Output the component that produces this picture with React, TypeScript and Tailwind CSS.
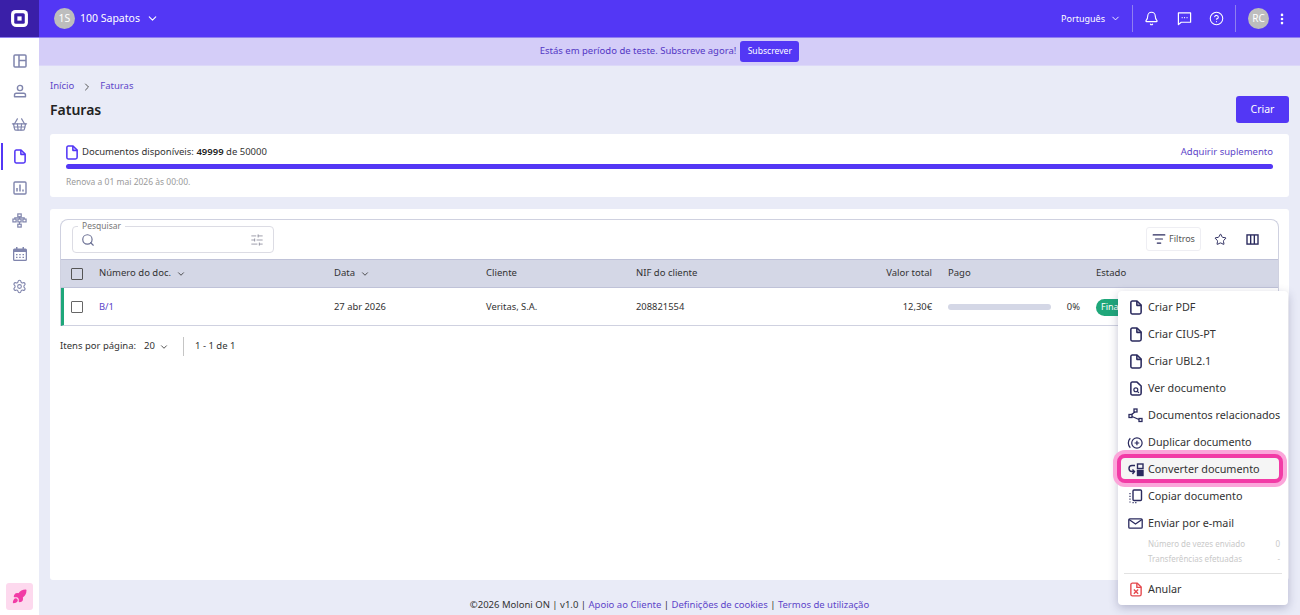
import { Bell, ChevronDown, ChevronRight, CircleHelp, EllipsisVertical, Search, SlidersHorizontal, Star, Rocket, ShoppingBasket, Settings, ListFilter } from "lucide-react";

function DocIcon({ className = "" }: { className?: string }) {
  return (
    <svg viewBox="0 0 14 17" fill="none" stroke="currentColor" strokeWidth="1.8" className={"h-[15px] w-[12px] " + className}>
      <path d="M2.5 1h5.7L13 5.6V14a2 2 0 0 1-2 2H2.5A1.7 1.7 0 0 1 1 14.2V2.7A1.7 1.7 0 0 1 2.5 1Z" strokeLinejoin="round" />
      <path d="M8 1v5h5" strokeLinejoin="round" />
    </svg>
  );
}

function SideIcons() {
  const c = "text-[#8085ad]";
  return (
    <div className="flex flex-col items-center">
      <div className="h-[30px] flex items-center justify-center w-full">
        <svg viewBox="0 0 14 14" width="14" height="14" fill="none" stroke="currentColor" strokeWidth="1.5" className={c}>
          <rect x="1" y="1" width="12" height="12" rx="1" />
          <path d="M6 1v12M6 6.5h7" />
        </svg>
      </div>
      <div className="h-[30px] flex items-center justify-center w-full">
        <svg viewBox="0 0 14 14" width="14" height="14" fill="none" stroke="currentColor" strokeWidth="1.4" className={c}>
          <circle cx="7" cy="4" r="2.6" />
          <path d="M1.5 12.8V11a1.8 1.8 0 0 1 1.8-1.8h7.4a1.8 1.8 0 0 1 1.8 1.8v1.8Z" strokeLinejoin="round" />
        </svg>
      </div>
      <div className="mt-[2px] h-[32px] flex items-center justify-center w-full">
        <ShoppingBasket size={17} strokeWidth={1.7} className={c} />
      </div>
      <div className="relative h-[32px] flex items-center justify-center w-full text-[#5337f5]">
        <div className="absolute left-[1px] top-[3px] h-[27px] w-[2px] bg-[#5337f5]" />
        <DocIcon />
      </div>
      <div className="h-[32px] flex items-center justify-center w-full">
        <svg viewBox="0 0 14 14" width="14" height="14" fill="none" stroke="currentColor" strokeWidth="1.4" className={c}>
          <rect x="1" y="1" width="12" height="12" rx="1" />
          <path d="M4 10.5V7M7 10.5V3.5M10 10.5V8.5" strokeWidth="1.5" />
        </svg>
      </div>
      <div className="h-[33px] flex items-center justify-center w-full">
        <svg viewBox="0 0 16 16" width="15" height="15" fill="none" stroke="currentColor" strokeWidth="1.3" className={c}>
          <rect x="6.2" y="1" width="3.6" height="3" />
          <rect x="1" y="6.5" width="3.4" height="3" />
          <rect x="6.3" y="6.5" width="3.4" height="3" />
          <rect x="11.6" y="6.5" width="3.4" height="3" />
          <rect x="6.2" y="12" width="3.6" height="3" />
          <path d="M3 6.5V5.2h10v1.3M8 4v2.5M8 9.5V12" />
        </svg>
      </div>
      <div className="h-[34px] flex items-center justify-center w-full">
        <svg viewBox="0 0 14 14" width="14" height="14" className={c}>
          <path d="M3 0h1.5v1.5h5V0H11v1.5h1.5A1.5 1.5 0 0 1 14 3v9.5a1.5 1.5 0 0 1-1.5 1.5h-11A1.5 1.5 0 0 1 0 12.5V3a1.5 1.5 0 0 1 1.5-1.5H3Z" fill="currentColor" />
          <rect x="1.3" y="5" width="11.4" height="7.7" fill="#fff" />
          <path d="M3 7h1.5v1.2H3ZM6.2 7h1.5v1.2H6.2ZM9.5 7H11v1.2H9.5ZM3 9.7h1.5v1.2H3ZM6.2 9.7h1.5v1.2H6.2ZM9.5 9.7H11v1.2H9.5Z" fill="currentColor" />
        </svg>
      </div>
      <div className="h-[30px] flex items-center justify-center w-full">
        <Settings size={15} strokeWidth={1.7} className={c} />
      </div>
    </div>
  );
}

const ink = "text-[#2a2a5e]";

function MenuItem({ icon, label, active }: { icon: React.ReactNode; label: string; active?: boolean }) {
  return (
    <div className="relative flex h-[27px] items-center pl-[5px]">
      {active && <div className="absolute left-[-1px] right-[5px] top-[-2px] bottom-0 rounded-[8px] border-[4px] border-[#f23ba6] bg-[#f5f5f5] shadow-[0_0_0_4px_#fba6da]" />}
      <span className={"relative flex w-[25px] justify-center " + ink}>{icon}</span>
      <span className="relative whitespace-nowrap text-[10.8px] text-[#333]">{label}</span>
    </div>
  );
}

export default function App() {
  return (
    <div className="relative h-[615px] w-[1300px] overflow-hidden bg-[#e9ebf7] font-['Noto_Sans',sans-serif] text-[#333]">
      <header className="flex h-[38px] border-b border-[#8f7ff0] bg-[#5337f5] text-white">
        <div className="flex w-[39px] items-center justify-center bg-[#3a1fa8]">
          <svg viewBox="0 0 18 18" width="19" height="19">
            <path d="M5 1h8a4 4 0 0 1 4 4v8a4 4 0 0 1-4 4H6a5 5 0 0 1-5-5V5a4 4 0 0 1 4-4Z" fill="#fff" />
            <rect x="4" y="4" width="10" height="10" rx="1.5" fill="#3a1fa8" />
            <rect x="7" y="7" width="4" height="4" fill="#fff" />
          </svg>
        </div>
        <div className="ml-[15px] flex items-center">
          <div className="flex h-[21px] w-[21px] items-center justify-center rounded-full bg-[#bdbdbd] text-[10.5px] text-white">1S</div>
          <span className="ml-[5px] text-[10.5px]">100 Sapatos</span>
          <ChevronDown size={13} className="ml-[6px]" />
        </div>
        <div className="ml-auto flex items-center">
          <span className="text-[9px]">Português</span>
          <ChevronDown size={11} className="ml-[5px]" />
          <div className="ml-[11px] h-[27px] w-px bg-[#8f7ff0]" />
          <Bell size={15} strokeWidth={1.8} className="ml-[11px]" />
          <svg viewBox="0 0 16 16" width="15" height="15" fill="none" stroke="currentColor" strokeWidth="1.3" className="ml-[18px]">
            <path d="M1.5 2h13v10H4.5l-3 2.5Z" strokeLinejoin="round" />
            <path d="M5 7h1M7.6 7h1M10.2 7h1" />
          </svg>
          <CircleHelp size={15} strokeWidth={1.7} className="ml-[17px]" />
          <div className="ml-[11px] h-[27px] w-px bg-[#8f7ff0]" />
          <div className="ml-[12px] flex h-[21px] w-[21px] items-center justify-center rounded-full bg-[#bdbdbd] text-[10px]">RC</div>
          <EllipsisVertical size={14} strokeWidth={2.5} className="ml-[6px] mr-[11px]" />
        </div>
      </header>

      <div className="flex h-[577px]">
        <aside className="flex w-[39px] flex-col justify-between bg-white pt-[8px]">
          <SideIcons />
          <div className="mb-[5px] ml-[6px] flex h-[27px] w-[27px] items-center justify-center rounded-[3px] bg-[#fdd9ee]">
            <Rocket size={15} strokeWidth={2.4} className="text-[#f23ba6] fill-[#f23ba6]" />
          </div>
        </aside>

        <main className="flex flex-1 flex-col">
          <div className="flex h-[28px] items-center justify-center border-b border-[#dcd8f8] bg-[#d4cdf8]">
            <span className="text-[9.5px] text-[#5337c5]">Estás em período de teste. Subscreve agora!</span>
            <span className="ml-[4px] flex h-[21px] w-[59px] items-center justify-center rounded-[3px] bg-[#5337f5] text-[8.6px] text-white">Subscrever</span>
          </div>

          <div className="flex flex-1 flex-col pl-[11px] pr-[11px]">
            <div className="flex justify-between">
              <div>
                <div className="mt-[14px] flex h-[13px] items-center text-[9.5px] text-[#5d45c9]">
                  <span>Início</span>
                  <ChevronRight size={12} className="mx-[7px] text-[#555]" />
                  <span>Faturas</span>
                </div>
                <h1 className="mt-[7px] text-[14px] leading-[19px] font-semibold text-[#222]">Faturas</h1>
              </div>
              <div className="mt-[30px] flex h-[27px] w-[53px] items-center justify-center rounded-[3px] bg-[#5337f5] text-[10.5px] text-white">Criar</div>
            </div>

            <section className="mt-[11px] h-[63px] rounded-[3px] bg-white px-[16px] pt-[11px]">
              <div className="flex items-center justify-between">
                <div className="flex items-center text-[9.5px]">
                  <DocIcon className="text-[#5337f5]" />
                  <span className="ml-[4px]">Documentos disponíveis: <b className="font-semibold text-[#222]">49999</b> de 50000</span>
                </div>
                <span className="text-[9.5px] text-[#5d45c9]">Adquirir suplemento</span>
              </div>
              <div className="mt-[4px] h-[5px] rounded-full bg-[#5337f5]" />
              <div className="mt-[7px] text-[8.5px] text-[#9a9a9a]">Renova a 01 mai 2026 às 00:00.</div>
            </section>

            <section className="mt-[12px] flex h-[371px] flex-col rounded-[3px] bg-white px-[10px] pt-[10px]">
              <div className="rounded-t-[8px] border border-[#cfd1e0] border-b-0">
                <div className="flex h-[39px] items-start px-[11px]">
                  <div className="relative mt-[6px] flex h-[27px] w-[202px] items-center justify-between rounded-[4px] border border-[#dcdce4] pl-[8px] pr-[9px]">
                    <span className="absolute left-[5px] top-[-6px] bg-white px-[4px] text-[8.5px] leading-[10px] text-[#777]">Pesquisar</span>
                    <Search size={14} className="text-[#6b7094]" />
                    <SlidersHorizontal size={14} strokeWidth={1.4} className="text-[#8a8a9a]" />
                  </div>
                  <div className="ml-auto mt-[7px] flex h-[24px] w-[55px] items-center justify-center rounded-[3px] border border-[#eeeef3] text-[9px] text-[#555]">
                    <ListFilter size={14} className={"mr-[3px] " + ink} />
                    Filtros
                  </div>
                  <Star size={13} strokeWidth={1.8} className={"ml-[13px] mt-[13px] " + ink} />
                  <svg viewBox="0 0 14 12" width="13" height="11" fill="none" stroke="currentColor" strokeWidth="1.5" className={"ml-[19px] mt-[14px] mr-[8px] " + ink}>
                    <rect x="1" y="1" width="12" height="10" />
                    <path d="M5 1v10M9 1v10" />
                  </svg>
                </div>

                <div className="flex h-[29px] items-center border-y border-[#bfc2d8] bg-[#d4d7e6] text-[9.5px] text-[#333]">
                  <span className="ml-[10px] h-[12px] w-[12px] rounded-[1px] border-[1.5px] border-[#555]" />
                  <span className="ml-[16px] flex w-[235px] items-center">Número do doc.<ChevronDown size={10} className="ml-[5px]" /></span>
                  <span className="flex w-[152px] items-center">Data<ChevronDown size={10} className="ml-[5px]" /></span>
                  <span className="w-[150px]">Cliente</span>
                  <span className="w-[150px]">NIF do cliente</span>
                  <span className="w-[146px] text-right">Valor total</span>
                  <span className="ml-[16px] w-[148px]">Pago</span>
                  <span>Estado</span>
                </div>

                <div className="flex h-[38px] items-center border-b border-[#cfd1e0] border-l-[3px] border-l-[#1fa77a] pt-[1px] text-[9.4px]">
                  <span className="ml-[7px] h-[12px] w-[12px] rounded-[1px] border-[1.5px] border-[#666]" />
                  <span className="ml-[16px] w-[235px] text-[#5d45c9]">B/1</span>
                  <span className="w-[152px]">27 abr 2026</span>
                  <span className="w-[150px]">Veritas, S.A.</span>
                  <span className="w-[150px]">208821554</span>
                  <span className="w-[146px] text-right">12,30€</span>
                  <div className="ml-[16px] h-[6px] w-[103px] rounded-full bg-[#d4d7e6]" />
                  <span className="w-[29px] text-right">0%</span>
                  <span className="ml-[16px] flex h-[17px] w-[60px] items-center rounded-full bg-[#1fa77a] pl-[5px] text-[9px] text-white">Finalizado</span>
                </div>
              </div>

              <div className="mt-[11px] flex items-center text-[9.5px]">
                <span>Itens por página:</span>
                <span className="ml-[8px]">20</span>
                <ChevronDown size={10} className="ml-[4px]" />
                <div className="ml-[14px] h-[19px] w-px bg-[#c5c5c5]" />
                <span className="ml-[11px]">1 - 1 de 1</span>
              </div>
            </section>

            <footer className="mt-[18px] flex justify-center text-[9.5px] text-[#333]">
              ©2026 Moloni ON&nbsp;|&nbsp;v1.0&nbsp;|&nbsp;<span className="text-[#5d45c9]">Apoio ao Cliente</span>&nbsp;|&nbsp;<span className="text-[#5d45c9]">Definições de cookies</span>&nbsp;|&nbsp;<span className="text-[#5d45c9]">Termos de utilização</span>
            </footer>
          </div>
        </main>
      </div>

      <div className="absolute left-[1118px] top-[291px] h-[314px] w-[170px] rounded-[4px] bg-white pt-[3px] shadow-[0_3px_10px_rgba(60,60,110,0.3)]">
        <MenuItem icon={<DocIcon />} label="Criar PDF" />
        <MenuItem icon={<DocIcon />} label="Criar CIUS-PT" />
        <MenuItem icon={<DocIcon />} label="Criar UBL2.1" />
        <MenuItem
          icon={
            <svg viewBox="0 0 14 17" className="h-[15px] w-[12px]" fill="none" stroke="currentColor" strokeWidth="1.8">
              <path d="M2.5 1h5.7L13 5.6V14a2 2 0 0 1-2 2H2.5A1.7 1.7 0 0 1 1 14.2V2.7A1.7 1.7 0 0 1 2.5 1Z" strokeLinejoin="round" />
              <circle cx="6.8" cy="10" r="2.3" strokeWidth="1.4" />
              <path d="m8.6 11.8 1.8 1.8" strokeWidth="1.4" />
            </svg>
          }
          label="Ver documento"
        />
        <MenuItem
          icon={
            <svg viewBox="0 0 15 15" width="15" height="15" fill="none" stroke="currentColor" strokeWidth="1.3">
              <rect x="6" y="1" width="3" height="3" />
              <rect x="1" y="6.5" width="3" height="3" />
              <rect x="11" y="10.5" width="3" height="3" />
              <path d="M7 4 3.5 6.5M4 8.5l7 3" />
            </svg>
          }
          label="Documentos relacionados"
        />
        <MenuItem
          icon={
            <svg viewBox="0 0 18 14" width="17" height="14" fill="none" stroke="currentColor" strokeWidth="1.3">
              <circle cx="10.5" cy="7" r="5.5" />
              <path d="M10.5 4.5v5M8 7h5M3.5 2A7 7 0 0 0 3.5 12" />
            </svg>
          }
          label="Duplicar documento"
        />
        <MenuItem
          active
          icon={
            <svg viewBox="0 0 16 14" width="16" height="14" fill="none" stroke="currentColor" strokeWidth="1.4">
              <path d="M7 2.5H4a3 3 0 0 0 0 6h2M4.5 6.5 6.5 8.5l-2 2.5" />
              <rect x="9.5" y="1" width="5.5" height="4.5" />
              <rect x="9.5" y="7.5" width="5.5" height="5" fill="currentColor" />
            </svg>
          }
          label="Converter documento"
        />
        <MenuItem
          icon={
            <svg viewBox="0 0 15 15" width="15" height="15" fill="none" stroke="currentColor" strokeWidth="1.4">
              <rect x="5" y="1" width="8.5" height="10.5" rx="1" />
              <path d="M2 4v1.2M2 6.8v1.2M2 9.6v1.2M2 12.4v1.2M4.5 13.6h1.2M7.2 13.6h1.2" strokeWidth="1.2" />
            </svg>
          }
          label="Copiar documento"
        />
        <MenuItem
          icon={
            <svg viewBox="0 0 15 11" width="15" height="11" fill="none" stroke="currentColor" strokeWidth="1.3">
              <rect x="0.8" y="0.8" width="13.4" height="9.4" rx="1" />
              <path d="m1 1.5 6.5 4.5L14 1.5" />
            </svg>
          }
          label="Enviar por e-mail"
        />
        <div className="flex h-[13px] items-center justify-between pl-[30px] pr-[8px] text-[8px] leading-[13px] text-[#c9c9c9]">
          <span>Número de vezes enviado</span><span>0</span>
        </div>
        <div className="mt-[2px] flex h-[13px] items-center justify-between pl-[30px] pr-[8px] text-[8px] leading-[13px] text-[#c9c9c9]">
          <span>Transferências efetuadas</span><span>-</span>
        </div>
        <div className="mx-[6px] mt-[8px] mb-[2px] h-px bg-[#e2e2e2]" />
        <MenuItem
          icon={
            <svg viewBox="0 0 14 17" className="h-[15px] w-[12px]" fill="none" stroke="#e5484d" strokeWidth="1.6">
              <path d="M2.5 1h5.7L13 5.6V14a2 2 0 0 1-2 2H2.5A1.7 1.7 0 0 1 1 14.2V2.7A1.7 1.7 0 0 1 2.5 1Z" strokeLinejoin="round" />
              <path d="M8 1v5h5M4.5 8.5l5 5M9.5 8.5l-5 5" />
            </svg>
          }
          label="Anular"
        />
      </div>
    </div>
  );
}
